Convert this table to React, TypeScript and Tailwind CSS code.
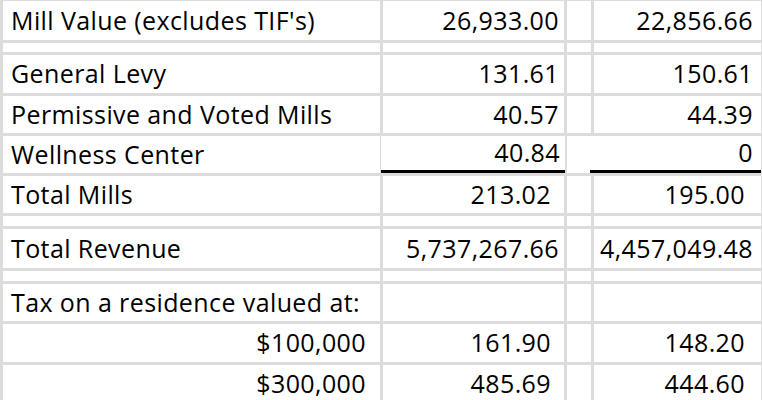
import React from 'react';

type Row = {
  label: string;
  a?: string;
  b?: string;
  h: string;
  spacer?: boolean;
  indent?: boolean; // label right aligned
  trail?: boolean; // values carry a trailing space
  underline?: boolean; // black rule under the values
};

const rows: Row[] = [
  { label: "Mill Value (excludes TIF's)", a: '26,933.00', b: '22,856.66', h: 'h-[39px]' },
  { label: '', h: 'h-[9px]', spacer: true },
  { label: 'General Levy', a: '131.61', b: '150.61', h: 'h-[38px]' },
  { label: 'Permissive and Voted Mills', a: '40.57', b: '44.39', h: 'h-[37px]' },
  { label: 'Wellness Center', a: '40.84', b: '0', h: 'h-[37px]', underline: true },
  { label: 'Total Mills', a: '213.02', b: '195.00', h: 'h-[37px]', trail: true },
  { label: '', h: 'h-[10px]', spacer: true },
  { label: 'Total Revenue', a: '5,737,267.66', b: '4,457,049.48', h: 'h-[39px]' },
  { label: '', h: 'h-[10px]', spacer: true },
  { label: 'Tax on a residence valued at:', h: 'h-[37px]' },
  { label: '$100,000', a: '161.90', b: '148.20', h: 'h-[38px]', indent: true, trail: true },
  { label: '$300,000', a: '485.69', b: '444.60', h: 'h-[38px]', indent: true, trail: true },
];

const App = () => {
  return (
    <div className="w-[762px] h-[400px] overflow-hidden bg-white">
      <div
        className="grid grid-cols-[377px_181px_24px_167px] gap-[3px] bg-[#dcdcdc] pl-[3px] pr-[3px] pt-[1px] w-[764px] text-[25px] tracking-[0.4px] text-black leading-none"
        style={{ fontFamily: '"Open Sans", "Noto Sans", sans-serif' }}
      >
        {rows.map((r, i) => (
          <React.Fragment key={i}>
            {/* label */}
            <div
              className={`${r.h} bg-white flex items-center pb-[1px] whitespace-nowrap ${
                r.indent ? 'justify-end pr-[14px]' : 'pl-[8px]'
              }`}
            >
              {r.label}
            </div>
            {/* first value */}
            <div
              className={`${r.h} bg-white flex items-center justify-end pb-[1px] ${
                r.trail ? 'pr-[13px]' : 'pr-[5px]'
              } ${r.underline ? '-mb-[3px] border-b-[3px] border-black -ml-[2px] -mr-[1px]' : ''}`}
            >
              {r.a}
            </div>
            {/* spacer column */}
            <div className={`${r.h} bg-white`} />
            {/* second value */}
            <div
              className={`${r.h} bg-white flex items-center justify-end pb-[1px] ${
                r.trail ? 'pr-[16px]' : 'pr-[8px]'
              } ${r.underline ? '-mb-[3px] border-b-[3px] border-black -ml-[4px]' : ''}`}
            >
              {r.b}
            </div>
          </React.Fragment>
        ))}
      </div>
    </div>
  );
};

export default App;
